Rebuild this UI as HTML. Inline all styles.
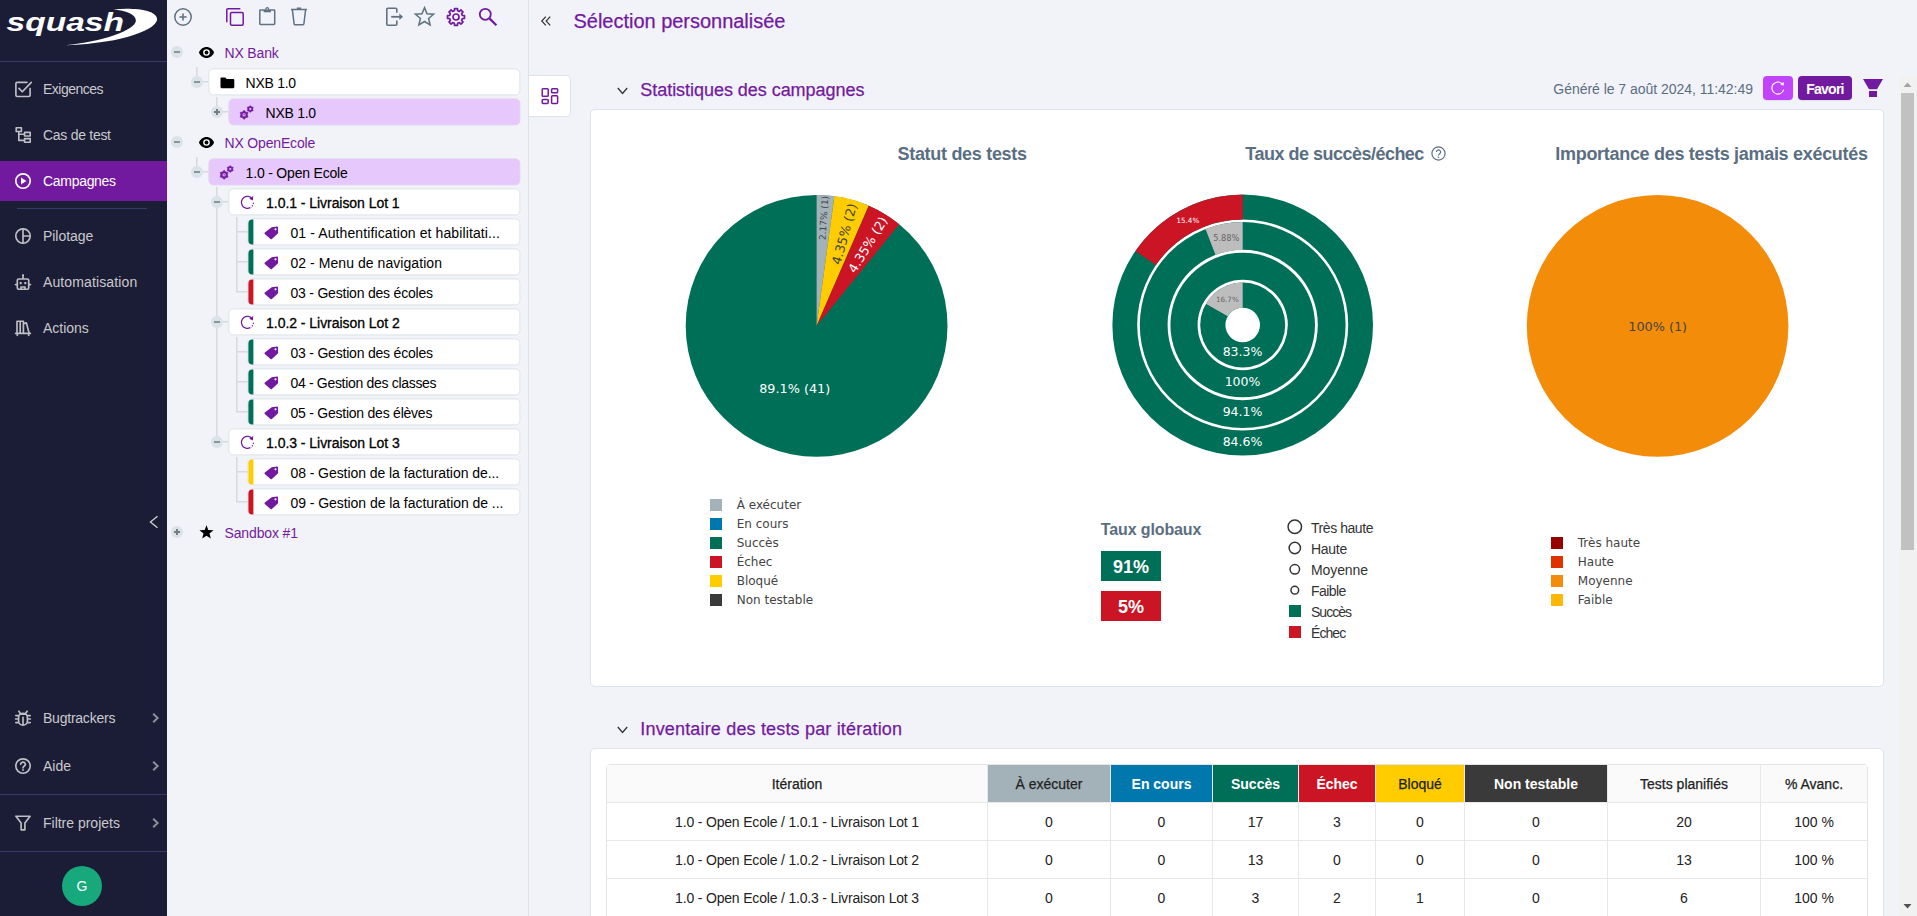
<!DOCTYPE html>
<html lang="fr">
<head>
<meta charset="utf-8">
<title>Squash - Campagnes</title>
<style>
*{box-sizing:border-box;}
html,body{margin:0;padding:0;}
body{width:1917px;height:916px;overflow:hidden;background:#f2f3f8;font-family:"Liberation Sans",sans-serif;font-size:14px;color:#000;position:relative;}
.a{position:absolute;}
svg{display:block;position:absolute;overflow:visible;}
#nav{position:absolute;left:0;top:0;width:167px;height:916px;background:#1b1d36;}
#nav .sep{position:absolute;height:1px;background:#363a6b;}
#nav .item{position:absolute;left:0;width:167px;height:40px;color:#c9c9cc;font-size:14px;line-height:40px;}
#nav .item.on{background:#721a9f;color:#fff;}
#nav .item .tx{position:absolute;left:43px;top:0;white-space:nowrap;}
#tree{position:absolute;left:167px;top:0;width:362px;height:916px;background:#f2f3f8;border-right:1px solid #dce5ea;}
.row{position:absolute;height:27px;transform:translate(-.6px,-.6px);border:1px solid #dbe4e9;border-radius:5px;background:#fff;font-size:14px;line-height:28px;white-space:nowrap;overflow:hidden;color:#000;}
.row.sel{background:#e6c8fc;border-color:#e3d2f2;}
.row .tx{position:absolute;top:0;}
.row .bar{position:absolute;left:-1px;top:-1px;width:6px;height:27px;border-radius:5px 0 0 5px;}
.proj{position:absolute;font-size:14px;color:#721a9f;line-height:20px;white-space:nowrap;}
.tog{position:absolute;width:12px;height:12px;border-radius:6px;background:#dae3e8;}
.tog:before{content:"";position:absolute;left:3px;top:5px;width:6px;height:2px;background:#8b9499;}
.tog.plus:after{content:"";position:absolute;left:5px;top:3px;width:2px;height:6px;background:#8b9499;}
.tog.plus:before{background:#767c80;}
.tog.plus:after{background:#767c80;}
.ln{position:absolute;background:#dadde0;}
#main{position:absolute;left:529px;top:0;width:1388px;height:916px;}
.h1{position:absolute;color:#721a9f;white-space:nowrap;-webkit-text-stroke:.25px #721a9f;}
.card{position:absolute;background:#fff;border:1px solid #dbe5ea;border-radius:5px;}
.ct{position:absolute;font-weight:bold;color:#5a6e82;font-size:18px;white-space:nowrap;line-height:22px;}
.lg{position:absolute;font-family:"DejaVu Sans","Liberation Sans",sans-serif;font-size:12px;color:#444;white-space:nowrap;line-height:14px;}
.lg2{position:absolute;font-size:14px;color:#333;white-space:nowrap;line-height:16px;}
.sw{position:absolute;width:12px;height:12px;}
table{border-collapse:collapse;}
</style>
</head>
<body>
<div id="nav">
<svg style="left:0;top:0" width="167" height="60" viewBox="0 0 167 60"><path fill="#fff" d="M113.5 9.2c20-1.6 42.5 0 43.6 9.6 1 9.5-31 24.6-91.600 26.400 36-3.600 70.500-15 70.400-24.800-.1-6.300-10.400-9.600-22.400-11.200z"/><text x="0" y="0" transform="translate(6.600 30.700) scale(1.315 1)" font-family="Liberation Sans, sans-serif" font-weight="bold" font-style="italic" font-size="25.5" fill="#fff">squash</text></svg>
<div class="sep" style="left:0;top:61px;width:167px"></div>
<div class="item" style="top:69px"><svg style="left:15px;top:12px" width="16" height="16" viewBox="0 0 16 16"><path fill="none" stroke="#bfbfc4" stroke-width="1.65" stroke-linecap="round" stroke-linejoin="round" d="M12 1.3H2.2a1.3 1.3 0 0 0-1.3 1.3v11.6a1.3 1.3 0 0 0 1.3 1.3h11.6a1.3 1.3 0 0 0 1.3-1.3V7.5"/><path fill="none" stroke="#bfbfc4" stroke-width="1.65" stroke-linecap="round" stroke-linejoin="round" d="M4 7.4l3.3 3.4L16.3 1.4"/></svg><span class="tx" style="letter-spacing:-0.51px;">Exigences</span>
</div>
<div class="item" style="top:115px"><svg style="left:15px;top:12px" width="16" height="16" viewBox="0 0 16 16"><path fill="none" stroke="#bfbfc4" stroke-width="1.65" stroke-linecap="round" stroke-linejoin="round" stroke-linejoin="miter" d="M1.2 .7h5.2v3.8H1.2zM9.6 5.4h5.6v3.6H9.6zM9.6 11.6h5.6v3.6H9.6zM3.8 4.5v8.9h5.8M3.8 7.2h5.8"/></svg><span class="tx" style="letter-spacing:-0.28px;">Cas de test</span>
</div>
<div class="item on" style="top:161px"><svg style="left:15px;top:12px" width="16" height="16" viewBox="0 0 16 16"><circle fill="none" stroke="#fff" stroke-width="1.65" stroke-linecap="round" stroke-linejoin="round" cx="8" cy="8" r="7.2" stroke-width="1.6"/><path fill="#fff" d="M6 4.500v7l5.400-3.500z"/></svg><span class="tx" style="letter-spacing:-0.30px;">Campagnes</span>
</div>
<div class="item" style="top:216px"><svg style="left:15px;top:12px" width="16" height="16" viewBox="0 0 16 16"><circle fill="none" stroke="#bfbfc4" stroke-width="1.65" stroke-linecap="round" stroke-linejoin="round" cx="8" cy="8" r="7.2"/><path fill="none" stroke="#bfbfc4" stroke-width="1.65" stroke-linecap="round" stroke-linejoin="round" d="M8 .8v14.4M8 8h7.2"/></svg><span class="tx" style="letter-spacing:-0.05px;">Pilotage</span>
</div>
<div class="item" style="top:262px"><svg style="left:15px;top:12px" width="16" height="16" viewBox="0 0 16 16"><path fill="none" stroke="#bfbfc4" stroke-width="1.65" stroke-linecap="round" stroke-linejoin="round" d="M8 1.2v3.600M3.600 5h8.800a1.300 1.300 0 0 1 1.300 1.300v7.600a1.300 1.300 0 0 1-1.300 1.300H3.600a1.300 1.300 0 0 1-1.300-1.300V6.300a1.300 1.300 0 0 1 1.300-1.300zM.5 10.600h1.600M13.900 10.600h1.600M6 15v-2h4v2"/><circle cx="8" cy="1.2" r="1" fill="#bfbfc4"/><rect x="4.700" y="8" width="2" height="2.200" fill="#bfbfc4"/><rect x="9.300" y="8" width="2" height="2.200" fill="#bfbfc4"/></svg><span class="tx" style="letter-spacing:0.12px;">Automatisation</span>
</div>
<div class="item" style="top:308px"><svg style="left:15px;top:12px" width="16" height="16" viewBox="0 0 16 16"><path fill="none" stroke="#bfbfc4" stroke-width="1.65" stroke-linecap="round" stroke-linejoin="round" stroke-linejoin="miter" d="M2 13.2V1.2h3.2v12M5.2 13.2V1.2h3.2v12M8.8 3.6l2.6-.7 2.7 10.3M.6 13.4h14.8M2.3 13.4v2M13.7 13.4v2"/></svg><span class="tx" style="letter-spacing:-0.02px;">Actions</span>
</div>
<div class="item" style="top:698px"><svg style="left:15px;top:12px" width="16" height="16" viewBox="0 0 16 16"><path fill="none" stroke="#bfbfc4" stroke-width="1.65" stroke-linecap="round" stroke-linejoin="round" d="M5.2 3.2L3.9 1.2M10.8 3.2l1.3-2M3.6 7.4a4.4 4.2 0 0 1 8.8 0v3.6a4.4 4.2 0 0 1-8.8 0zM.8 5.6h2.6M12.6 5.6h2.6M.6 9h3M12.4 9h3M.8 12.6h2.8M12.4 12.6h2.8M8 7.2v7M5.6 4.2h4.8"/></svg><span class="tx" style="letter-spacing:-0.23px;">Bugtrackers</span>
<svg style="left:152px;top:15px" width="7" height="10" viewBox="0 0 7 10"><path fill="none" stroke="#8f8f9a" stroke-width="2" d="M1.2 .8L5.6 5 1.2 9.200"/></svg>
</div>
<div class="item" style="top:746px"><svg style="left:15px;top:12px" width="16" height="16" viewBox="0 0 16 16"><circle fill="none" stroke="#bfbfc4" stroke-width="1.65" stroke-linecap="round" stroke-linejoin="round" cx="8" cy="8" r="7.2"/><path fill="none" stroke="#bfbfc4" stroke-width="1.65" stroke-linecap="round" stroke-linejoin="round" d="M5.7 6.3a2.3 2.2 0 1 1 3.4 1.9c-.8.5-1.1.9-1.1 1.8"/><circle cx="8" cy="12" r=".9" fill="#bfbfc4"/></svg><span class="tx" style="letter-spacing:-0.01px;">Aide</span>
<svg style="left:152px;top:15px" width="7" height="10" viewBox="0 0 7 10"><path fill="none" stroke="#8f8f9a" stroke-width="2" d="M1.2 .8L5.6 5 1.2 9.200"/></svg>
</div>
<div class="item" style="top:803px"><svg style="left:15px;top:12px" width="16" height="16" viewBox="0 0 16 16"><path fill="none" stroke="#bfbfc4" stroke-width="1.65" stroke-linecap="round" stroke-linejoin="round" stroke-linejoin="miter" d="M.9 1.2h14.2L9.9 8v6.8H6.1V8z"/></svg><span class="tx" style="letter-spacing:-0.01px;">Filtre projets</span>
<svg style="left:152px;top:15px" width="7" height="10" viewBox="0 0 7 10"><path fill="none" stroke="#8f8f9a" stroke-width="2" d="M1.2 .8L5.6 5 1.2 9.200"/></svg>
</div>
<div class="sep" style="left:17px;top:208px;width:130px"></div>
<div class="sep" style="left:0;top:794px;width:167px"></div>
<div class="sep" style="left:0;top:851px;width:167px"></div>
<svg style="left:149px;top:515px" width="10" height="14" viewBox="0 0 10 14"><path fill="none" stroke="#d0d0d4" stroke-width="1.300" d="M8.500 1.200L1.400 7l7.100 5.800"/></svg>
<div class="a" style="left:62px;top:866px;width:40px;height:40px;border-radius:20px;background:#17a87b;color:#fff;font-size:14px;line-height:40px;text-align:center">G</div>
</div>
<div id="tree" style="left:0;width:529px;background:none">
<svg style="left:174px;top:8px" width="18" height="18" viewBox="0 0 18 18"><circle cx="9" cy="9" r="8.200" fill="none" stroke="#5e7282" stroke-width="1.500"/><path stroke="#5e7282" stroke-width="1.600" d="M5.400 9h7.200M9 5.400v7.200"/></svg>
<svg style="left:226px;top:8px" width="18" height="18" viewBox="0 0 18 18"><path fill="none" stroke="#721a9f" stroke-width="1.500" stroke-linejoin="round" d="M.8 14.300V1.800a1 1 0 0 1 1-1h12.500"/><rect x="4.500" y="4.600" width="12.700" height="12.700" rx="1.200" fill="none" stroke="#721a9f" stroke-width="1.500"/></svg>
<svg style="left:259px;top:7px" width="17" height="19" viewBox="0 0 17 19"><path fill="none" stroke="#5e7282" stroke-width="1.500" stroke-linejoin="round" d="M4.800 2.900H1.500a.7.700 0 0 0-.7.700v13.200a.7.700 0 0 0 .7.700h13.500a.7.700 0 0 0 .7-.7V3.600a.7.700 0 0 0-.7-.7H11.700"/><path fill="#5e7282" d="M4.600 2.300h7.300v3H4.600z"/><circle cx="8.250" cy="2" r="1.300" fill="#f2f3f8" stroke="#5e7282" stroke-width="1.300"/></svg>
<svg style="left:290px;top:7px" width="18" height="19" viewBox="0 0 18 19"><path fill="none" stroke="#5e7282" stroke-width="1.500" stroke-linejoin="round" d="M1 2.600h16M6.800 1.200h4.400M2.400 2.800l1.700 14a1 1 0 0 0 1 .9h7.800a1 1 0 0 0 1-.9l1.700-14"/></svg>
<svg style="left:386px;top:7px" width="18" height="19" viewBox="0 0 18 19"><path fill="none" stroke="#5e7282" stroke-width="1.600" stroke-linejoin="round" d="M10.800 5.800V2.200a1 1 0 0 0-1-1H1.800a1 1 0 0 0-1 1v15a1 1 0 0 0 1 1h8a1 1 0 0 0 1-1v-3.800"/><path fill="none" stroke="#5e7282" stroke-width="1.800" d="M5.200 9.800h9.500"/><path fill="#5e7282" d="M13.400 6.600l3.600 3.200-3.600 3.200z"/></svg>
<svg style="left:413.500px;top:5.500px" width="21" height="21" viewBox="0 0 21 21"><path fill="none" stroke="#5e7282" stroke-width="1.500" stroke-linejoin="miter" d="M10.50 1.60 L13.03 7.72 L19.63 8.23 L14.59 12.53 L16.14 18.97 L10.50 15.50 L4.86 18.97 L6.41 12.53 L1.37 8.23 L7.97 7.72Z"/></svg>
<svg style="left:446px;top:7px" width="20" height="20" viewBox="0 0 20 20"><path d="M8.52 1.53 L11.48 1.53 L11.63 3.67 L13.33 4.37 L14.95 2.96 L17.04 5.05 L15.63 6.67 L16.33 8.37 L18.47 8.52 L18.47 11.48 L16.33 11.63 L15.63 13.33 L17.04 14.95 L14.95 17.04 L13.33 15.63 L11.63 16.33 L11.48 18.47 L8.52 18.47 L8.37 16.33 L6.67 15.63 L5.05 17.04 L2.96 14.95 L4.37 13.33 L3.67 11.63 L1.53 11.48 L1.53 8.52 L3.67 8.37 L4.37 6.67 L2.96 5.05 L5.05 2.96 L6.67 4.37 L8.37 3.67Z" fill="none" stroke="#721a9f" stroke-width="1.7" stroke-linejoin="round"/><circle cx="10" cy="10" r="3" fill="none" stroke="#721a9f" stroke-width="1.7"/></svg>
<svg style="left:478px;top:7px" width="20" height="20" viewBox="0 0 20 20"><circle cx="7.300" cy="7.300" r="5.500" fill="none" stroke="#721a9f" stroke-width="1.800"/><path stroke="#721a9f" stroke-width="2.300" d="M11.400 11.400l7 6.800"/></svg>
<svg style="left:0;top:0" width="529" height="560" viewBox="0 0 529 560"><path fill="none" stroke="#d7dadd" stroke-width="1.500" d="M196.8 67V82M203 81.8H208M196.8 157V172M203 171.8H208M216.8 97V112M223 111.8H228M216.8 187V442M223 201.8H228M223 321.8H228M223 441.8H228M236.8 217V292.4M236.8 231.7H248M236.8 261.7H248M236.8 291.7H248M236.8 337V412.4M236.8 351.7H248M236.8 381.7H248M236.8 411.7H248M236.8 457V502.4M236.8 471.7H248M236.8 501.7H248"/></svg>
<div class="tog" style="left:171px;top:46px"></div>
<svg style="left:198.5px;top:46.5px" width="15" height="11" viewBox="0 0 15 11"><path fill="#000" d="M7.500 0C3.900 0 1.200 2.400 0 5.500 1.200 8.600 3.900 11 7.500 11S13.800 8.600 15 5.500C13.800 2.400 11.100 0 7.500 0z"/><circle cx="7.500" cy="5.500" r="3.300" fill="#fff"/><circle cx="7.500" cy="5.500" r="1.900" fill="#000"/></svg>
<div class="proj" style="left:224.500px;top:43px;letter-spacing:-0.16px;">NX Bank</div>
<div class="tog" style="left:191px;top:76px"></div>
<div class="row" style="left:209px;top:69px;width:312px">
<svg style="left:10.5px;top:7.8px" width="14" height="11" viewBox="0 0 14 11"><path fill="#000" d="M1.100 0h3.800l1.400 1.500h6.500a1.100 1.100 0 0 1 1.100 1.100v7.100a1.100 1.100 0 0 1-1.100 1.100H1.200A1.100 1.100 0 0 1 .1 9.700V1.100A1.100 1.100 0 0 1 1.100 0z"/></svg>
<span class="tx" style="left:36.2px;letter-spacing:-0.28px;">NXB 1.0</span></div>
<div class="tog plus" style="left:211px;top:106px"></div>
<div class="row sel" style="left:229px;top:99px;width:292px">
<svg style="left:9.8px;top:6px" width="14" height="14" viewBox="0 0 14 14"><path fill-rule="evenodd" fill="#721a9f" stroke="#721a9f" stroke-width=".5" stroke-linejoin="round" d="M4.70 4.80 L6.35 6.54 L8.68 7.10 L8.00 9.40 L8.68 11.70 L6.35 12.26 L4.70 14.00 L3.05 12.26 L0.72 11.70 L1.40 9.40 L0.72 7.10 L3.05 6.54ZM2.80 9.40a1.90 1.90 0 1 0 3.80 0a1.90 1.90 0 1 0 -3.80 0z"/><circle cx="4.70" cy="9.40" r="0.75" fill="#721a9f"/><path fill-rule="evenodd" fill="#721a9f" stroke="#721a9f" stroke-width=".5" stroke-linejoin="round" d="M10.80 0.10 L12.05 1.43 L13.83 1.85 L13.30 3.60 L13.83 5.35 L12.05 5.77 L10.80 7.10 L9.55 5.77 L7.77 5.35 L8.30 3.60 L7.77 1.85 L9.55 1.43ZM9.45 3.60a1.35 1.35 0 1 0 2.70 0a1.35 1.35 0 1 0 -2.70 0z"/></svg>
<span class="tx" style="left:36.2px;letter-spacing:-0.28px;">NXB 1.0</span></div>
<div class="tog" style="left:171px;top:136px"></div>
<svg style="left:198.5px;top:136.5px" width="15" height="11" viewBox="0 0 15 11"><path fill="#000" d="M7.500 0C3.900 0 1.200 2.400 0 5.500 1.200 8.600 3.900 11 7.500 11S13.800 8.600 15 5.500C13.800 2.400 11.100 0 7.500 0z"/><circle cx="7.500" cy="5.500" r="3.300" fill="#fff"/><circle cx="7.500" cy="5.500" r="1.900" fill="#000"/></svg>
<div class="proj" style="left:224.500px;top:133px;letter-spacing:-0.17px;">NX OpenEcole</div>
<div class="tog" style="left:191px;top:166px"></div>
<div class="row sel" style="left:209px;top:159px;width:312px">
<svg style="left:9.8px;top:6px" width="14" height="14" viewBox="0 0 14 14"><path fill-rule="evenodd" fill="#721a9f" stroke="#721a9f" stroke-width=".5" stroke-linejoin="round" d="M4.70 4.80 L6.35 6.54 L8.68 7.10 L8.00 9.40 L8.68 11.70 L6.35 12.26 L4.70 14.00 L3.05 12.26 L0.72 11.70 L1.40 9.40 L0.72 7.10 L3.05 6.54ZM2.80 9.40a1.90 1.90 0 1 0 3.80 0a1.90 1.90 0 1 0 -3.80 0z"/><circle cx="4.70" cy="9.40" r="0.75" fill="#721a9f"/><path fill-rule="evenodd" fill="#721a9f" stroke="#721a9f" stroke-width=".5" stroke-linejoin="round" d="M10.80 0.10 L12.05 1.43 L13.83 1.85 L13.30 3.60 L13.83 5.35 L12.05 5.77 L10.80 7.10 L9.55 5.77 L7.77 5.35 L8.30 3.60 L7.77 1.85 L9.55 1.43ZM9.45 3.60a1.35 1.35 0 1 0 2.70 0a1.35 1.35 0 1 0 -2.70 0z"/></svg>
<span class="tx" style="left:36.2px;letter-spacing:-0.19px;">1.0 - Open Ecole</span></div>
<div class="tog" style="left:211px;top:196px"></div>
<div class="row" style="left:229px;top:189px;width:292px">
<svg style="left:10.5px;top:6px" width="14" height="14" viewBox="0 0 14 14"><path fill="none" stroke="#721a9f" stroke-width="1.300" d="M9.800 12.300A6 6 0 1 1 11.600 3.100"/><path fill="#721a9f" d="M12.800 .7l-.3 4.300-3.700-1.700z"/><path fill="none" stroke="#721a9f" stroke-width="1.300" stroke-dasharray="1.200 1.300" d="M13 7.400a6 6 0 0 1-2.600 4.600"/></svg>
<span class="tx" style="left:36.7px;-webkit-text-stroke:.3px #000;letter-spacing:-0.05px;">1.0.1 - Livraison Lot 1</span></div>
<div class="row" style="left:248px;top:219px;width:273px">
<div class="bar" style="background:#006f57"></div>
<svg style="left:15.8px;top:6.5px" width="14" height="13" viewBox="0 0 14 13"><path fill="#721a9f" d="M7.300 .9l5.300-.8a.9.900 0 0 1 1 .9l.1 5.300a1 1 0 0 1-.3.700l-5.900 5.600a1 1 0 0 1-1.400 0L.4 7.600a1 1 0 0 1 0-1.400z"/><circle cx="11.100" cy="2.900" r="1.100" fill="#fff"/></svg>
<span class="tx" style="left:42px;letter-spacing:0.11px;">01 - Authentification et habilitati...</span></div>
<div class="row" style="left:248px;top:249px;width:273px">
<div class="bar" style="background:#006f57"></div>
<svg style="left:15.8px;top:6.5px" width="14" height="13" viewBox="0 0 14 13"><path fill="#721a9f" d="M7.300 .9l5.300-.8a.9.900 0 0 1 1 .9l.1 5.300a1 1 0 0 1-.3.700l-5.900 5.600a1 1 0 0 1-1.400 0L.4 7.600a1 1 0 0 1 0-1.400z"/><circle cx="11.100" cy="2.900" r="1.100" fill="#fff"/></svg>
<span class="tx" style="left:42px;letter-spacing:0.06px;">02 - Menu de navigation</span></div>
<div class="row" style="left:248px;top:279px;width:273px">
<div class="bar" style="background:#cb1524"></div>
<svg style="left:15.8px;top:6.5px" width="14" height="13" viewBox="0 0 14 13"><path fill="#721a9f" d="M7.300 .9l5.300-.8a.9.900 0 0 1 1 .9l.1 5.300a1 1 0 0 1-.3.700l-5.900 5.600a1 1 0 0 1-1.400 0L.4 7.600a1 1 0 0 1 0-1.400z"/><circle cx="11.100" cy="2.900" r="1.100" fill="#fff"/></svg>
<span class="tx" style="left:42px;letter-spacing:-0.20px;">03 - Gestion des écoles</span></div>
<div class="tog" style="left:211px;top:316px"></div>
<div class="row" style="left:229px;top:309px;width:292px">
<svg style="left:10.5px;top:6px" width="14" height="14" viewBox="0 0 14 14"><path fill="none" stroke="#721a9f" stroke-width="1.300" d="M9.800 12.300A6 6 0 1 1 11.600 3.100"/><path fill="#721a9f" d="M12.800 .7l-.3 4.300-3.700-1.700z"/><path fill="none" stroke="#721a9f" stroke-width="1.300" stroke-dasharray="1.200 1.300" d="M13 7.400a6 6 0 0 1-2.600 4.600"/></svg>
<span class="tx" style="left:36.7px;-webkit-text-stroke:.3px #000;letter-spacing:-0.04px;">1.0.2 - Livraison Lot 2</span></div>
<div class="row" style="left:248px;top:339px;width:273px">
<div class="bar" style="background:#006f57"></div>
<svg style="left:15.8px;top:6.5px" width="14" height="13" viewBox="0 0 14 13"><path fill="#721a9f" d="M7.300 .9l5.300-.8a.9.900 0 0 1 1 .9l.1 5.300a1 1 0 0 1-.3.700l-5.900 5.600a1 1 0 0 1-1.400 0L.4 7.600a1 1 0 0 1 0-1.400z"/><circle cx="11.100" cy="2.900" r="1.100" fill="#fff"/></svg>
<span class="tx" style="left:42px;letter-spacing:-0.20px;">03 - Gestion des écoles</span></div>
<div class="row" style="left:248px;top:369px;width:273px">
<div class="bar" style="background:#006f57"></div>
<svg style="left:15.8px;top:6.5px" width="14" height="13" viewBox="0 0 14 13"><path fill="#721a9f" d="M7.300 .9l5.300-.8a.9.900 0 0 1 1 .9l.1 5.300a1 1 0 0 1-.3.700l-5.900 5.600a1 1 0 0 1-1.400 0L.4 7.600a1 1 0 0 1 0-1.400z"/><circle cx="11.100" cy="2.900" r="1.100" fill="#fff"/></svg>
<span class="tx" style="left:42px;letter-spacing:-0.31px;">04 - Gestion des classes</span></div>
<div class="row" style="left:248px;top:399px;width:273px">
<div class="bar" style="background:#006f57"></div>
<svg style="left:15.8px;top:6.5px" width="14" height="13" viewBox="0 0 14 13"><path fill="#721a9f" d="M7.300 .9l5.300-.8a.9.900 0 0 1 1 .9l.1 5.300a1 1 0 0 1-.3.700l-5.900 5.600a1 1 0 0 1-1.400 0L.4 7.600a1 1 0 0 1 0-1.400z"/><circle cx="11.100" cy="2.900" r="1.100" fill="#fff"/></svg>
<span class="tx" style="left:42px;letter-spacing:-0.23px;">05 - Gestion des élèves</span></div>
<div class="tog" style="left:211px;top:436px"></div>
<div class="row" style="left:229px;top:429px;width:292px">
<svg style="left:10.5px;top:6px" width="14" height="14" viewBox="0 0 14 14"><path fill="none" stroke="#721a9f" stroke-width="1.300" d="M9.800 12.300A6 6 0 1 1 11.600 3.100"/><path fill="#721a9f" d="M12.800 .7l-.3 4.300-3.700-1.700z"/><path fill="none" stroke="#721a9f" stroke-width="1.300" stroke-dasharray="1.200 1.300" d="M13 7.400a6 6 0 0 1-2.600 4.600"/></svg>
<span class="tx" style="left:36.7px;-webkit-text-stroke:.3px #000;letter-spacing:-0.04px;">1.0.3 - Livraison Lot 3</span></div>
<div class="row" style="left:248px;top:459px;width:273px">
<div class="bar" style="background:#ffcc00"></div>
<svg style="left:15.8px;top:6.5px" width="14" height="13" viewBox="0 0 14 13"><path fill="#721a9f" d="M7.300 .9l5.300-.8a.9.900 0 0 1 1 .9l.1 5.300a1 1 0 0 1-.3.700l-5.900 5.600a1 1 0 0 1-1.400 0L.4 7.600a1 1 0 0 1 0-1.400z"/><circle cx="11.100" cy="2.900" r="1.100" fill="#fff"/></svg>
<span class="tx" style="left:42px;letter-spacing:-0.06px;">08 - Gestion de la facturation de...</span></div>
<div class="row" style="left:248px;top:489px;width:273px">
<div class="bar" style="background:#cb1524"></div>
<svg style="left:15.8px;top:6.5px" width="14" height="13" viewBox="0 0 14 13"><path fill="#721a9f" d="M7.300 .9l5.300-.8a.9.900 0 0 1 1 .9l.1 5.300a1 1 0 0 1-.3.700l-5.900 5.600a1 1 0 0 1-1.400 0L.4 7.600a1 1 0 0 1 0-1.400z"/><circle cx="11.100" cy="2.900" r="1.100" fill="#fff"/></svg>
<span class="tx" style="left:42px;letter-spacing:-0.05px;">09 - Gestion de la facturation de ...</span></div>
<div class="tog plus" style="left:171px;top:526px"></div>
<svg style="left:198.5px;top:524.5px" width="15" height="15" viewBox="0 0 15 15"><path fill="#000" d="M7.50 0.20 L9.32 5.09 L14.54 5.31 L10.45 8.56 L11.85 13.59 L7.50 10.70 L3.15 13.59 L4.55 8.56 L0.46 5.31 L5.68 5.09Z"/></svg>
<div class="proj" style="left:224.500px;top:523px;letter-spacing:-0.13px;">Sandbox #1</div>
</div>
<div class="a" style="left:528px;top:0;width:1px;height:916px;background:#dce5ea"></div>
<svg style="left:541px;top:16px" width="10" height="10" viewBox="0 0 10 10"><path fill="none" stroke="#333" stroke-width="1.200" d="M4.800 .6L.8 5l4 4.400M9.200 .6L5.200 5l4 4.400"/></svg>
<div class="h1" style="left:573.500px;top:8px;font-size:20px;line-height:26px;letter-spacing:-0.02px;">Sélection personnalisée</div>
<div class="a" style="left:529px;top:75px;width:42px;height:42px;background:#fff;border:1px solid #dbe5ea;border-left:none;border-radius:0 5px 5px 0"></div>
<svg style="left:541px;top:87px" width="18" height="18" viewBox="0 0 18 18"><g fill="none" stroke="#721a9f" stroke-width="1.500"><rect x="1.200" y="1.700" width="6" height="7.600" rx=".8"/><rect x="10.600" y="1.700" width="6" height="4" rx=".8"/><rect x="1.200" y="12.400" width="6" height="4" rx=".8"/><rect x="10.600" y="8.800" width="6" height="7.600" rx=".8"/></g></svg>
<svg style="left:616.5px;top:87px" width="11" height="8" viewBox="0 0 11 8"><path fill="none" stroke="#333" stroke-width="1.300" d="M.8 1l4.700 5.400L10.200 1"/></svg>
<div class="h1" style="left:640.300px;top:78px;font-size:18px;line-height:24px;letter-spacing:-0.04px;">Statistiques des campagnes</div>
<div class="a" style="left:1553.300px;top:80px;font-size:14px;line-height:18px;color:#5a6e82;white-space:nowrap;letter-spacing:-0.03px;">Généré le 7 août 2024, 11:42:49</div>
<div class="a" style="left:1763px;top:76px;width:30px;height:24px;border-radius:4px;background:#c144fc;box-shadow:0 1px 1px rgba(0,0,0,.08)"><svg style="left:8px;top:5px" width="14" height="14" viewBox="0 0 14 14"><path fill="none" stroke="#fff" stroke-width="1.200" d="M12.700 8.600A6 6 0 1 1 11 2.600"/><path fill="#fff" d="M12.800 .9l-.2 3.800-3.400-1.400z"/></svg></div>
<div class="a" style="left:1798px;top:76px;width:54px;height:24px;border-radius:4px;background:#721a9f;color:#fff;font-weight:bold;font-size:14px;line-height:26px;text-align:center;box-shadow:0 1px 1px rgba(0,0,0,.08);letter-spacing:-0.75px;">Favori</div>
<svg style="left:1863px;top:79px" width="20" height="18" viewBox="0 0 20 18"><path fill="#721a9f" d="M0 0h20l-6 10.200h-8zM6 12h8v6h-8z"/></svg>
<div class="card" style="left:590px;top:109px;width:1294px;height:578px"></div>
<div class="ct" style="left:897.500px;top:143px;letter-spacing:-0.30px;">Statut des tests</div>
<div class="ct" style="left:1245.300px;top:143px;letter-spacing:-0.51px;">Taux de succès/échec</div>
<svg style="left:1431px;top:146px" width="15" height="15" viewBox="0 0 15 15"><circle cx="7.500" cy="7.500" r="6.600" fill="none" stroke="#5a6e82" stroke-width="1.200"/><path fill="none" stroke="#5a6e82" stroke-width="1.200" d="M5.400 6a2.100 2 0 1 1 3.200 1.700c-.8.500-1.100.9-1.100 1.700"/><circle cx="7.500" cy="11.200" r=".8" fill="#5a6e82"/></svg>
<div class="ct" style="left:1555.300px;top:143px;letter-spacing:-0.30px;">Importance des tests jamais exécutés</div>
<svg style="left:0;top:0" width="1917" height="916" viewBox="0 0 1917 916">
<circle cx="816.6" cy="325.8" r="130.9" fill="#006f57"/>
<path d="M816.60 325.80 L816.60 194.90 A130.90 130.90 0 0 1 834.42 196.12 Z" fill="#a3b1b8" />
<path d="M816.60 325.80 L834.42 196.12 A130.90 130.90 0 0 1 868.75 205.74 Z" fill="#ffcc00" />
<path d="M816.60 325.80 L868.75 205.74 A130.90 130.90 0 0 1 899.21 224.26 Z" fill="#cb1524" />
<text x="823.90" y="218.00" font-family="DejaVu Sans, Liberation Sans, sans-serif" font-size="9" fill="#444" text-anchor="middle" dominant-baseline="central" transform="rotate(-86.09 823.90 218.00)">2.17% (1)</text>
<text x="844.30" y="234.00" font-family="DejaVu Sans, Liberation Sans, sans-serif" font-size="12.8" fill="#444" text-anchor="middle" dominant-baseline="central" transform="rotate(-74.35 844.30 234.00)">4.35% (2)</text>
<text x="867.80" y="244.80" font-family="DejaVu Sans, Liberation Sans, sans-serif" font-size="12.8" fill="#fff" text-anchor="middle" dominant-baseline="central" transform="rotate(-58.70 867.80 244.80)">4.35% (2)</text>
<text x="794.70" y="388.20" font-family="DejaVu Sans, Liberation Sans, sans-serif" font-size="12.8" fill="#fff" text-anchor="middle" dominant-baseline="central">89.1% (41)</text>
<path fill-rule="evenodd" fill="#006f57" d="M1112.40 325.00a130.30 130.30 0 1 0 260.60 0a130.30 130.30 0 1 0 -260.60 0zM1137.20 325.00a105.50 105.50 0 1 0 211.00 0a105.50 105.50 0 1 0 -211.00 0z"/>
<path d="M1135.45 251.01 A130.30 130.30 0 0 1 1242.70 194.70 L1242.70 219.50 A105.50 105.50 0 0 0 1155.86 265.09 Z" fill="#cb1524" />
<path fill-rule="evenodd" fill="#006f57" d="M1139.80 325.00a102.90 102.90 0 1 0 205.80 0a102.90 102.90 0 1 0 -205.80 0zM1167.60 325.00a75.10 75.10 0 1 0 150.20 0a75.10 75.10 0 1 0 -150.20 0z"/>
<path d="M1205.49 229.06 A102.90 102.90 0 0 1 1242.70 222.10 L1242.70 249.90 A75.10 75.10 0 0 0 1215.54 254.98 Z" fill="#bdbdbd" />
<path fill-rule="evenodd" fill="#006f57" d="M1170.40 325.00a72.30 72.30 0 1 0 144.60 0a72.30 72.30 0 1 0 -144.60 0zM1197.60 325.00a45.10 45.10 0 1 0 90.20 0a45.10 45.10 0 1 0 -90.20 0z"/>
<path fill-rule="evenodd" fill="#006f57" d="M1200.20 325.00a42.50 42.50 0 1 0 85.00 0a42.50 42.50 0 1 0 -85.00 0zM1225.40 325.00a17.30 17.30 0 1 0 34.60 0a17.30 17.30 0 1 0 -34.60 0z"/>
<path d="M1205.89 303.75 A42.50 42.50 0 0 1 1242.70 282.50 L1242.70 307.70 A17.30 17.30 0 0 0 1227.72 316.35 Z" fill="#bdbdbd" />
<text x="1187.80" y="220.60" font-family="DejaVu Sans, Liberation Sans, sans-serif" font-size="7.2" fill="#fff" text-anchor="middle" dominant-baseline="central">15.4%</text>
<text x="1226.20" y="238.30" font-family="DejaVu Sans, Liberation Sans, sans-serif" font-size="8.2" fill="#666" text-anchor="middle" dominant-baseline="central">5.88%</text>
<text x="1227.30" y="299.40" font-family="DejaVu Sans, Liberation Sans, sans-serif" font-size="7.2" fill="#666" text-anchor="middle" dominant-baseline="central">16.7%</text>
<text x="1242.50" y="351.50" font-family="DejaVu Sans, Liberation Sans, sans-serif" font-size="12.5" fill="#fff" text-anchor="middle" dominant-baseline="central">83.3%</text>
<text x="1242.50" y="381.50" font-family="DejaVu Sans, Liberation Sans, sans-serif" font-size="12.5" fill="#fff" text-anchor="middle" dominant-baseline="central">100%</text>
<text x="1242.50" y="411.50" font-family="DejaVu Sans, Liberation Sans, sans-serif" font-size="12.5" fill="#fff" text-anchor="middle" dominant-baseline="central">94.1%</text>
<text x="1242.50" y="441.50" font-family="DejaVu Sans, Liberation Sans, sans-serif" font-size="12.5" fill="#fff" text-anchor="middle" dominant-baseline="central">84.6%</text>
<circle cx="1657.6" cy="325.9" r="130.8" fill="#f38c08"/>
<text x="1657.70" y="326.70" font-family="DejaVu Sans, Liberation Sans, sans-serif" font-size="12.8" fill="#444" text-anchor="middle" dominant-baseline="central">100% (1)</text>
</svg>
<div class="sw" style="left:710px;top:499px;background:#a3b1b8"></div><div class="lg" style="left:736.700px;top:498px">À exécuter</div>
<div class="sw" style="left:710px;top:518px;background:#0078ae"></div><div class="lg" style="left:736.700px;top:517px">En cours</div>
<div class="sw" style="left:710px;top:537px;background:#006f57"></div><div class="lg" style="left:736.700px;top:536px">Succès</div>
<div class="sw" style="left:710px;top:556px;background:#cb1524"></div><div class="lg" style="left:736.700px;top:555px">Échec</div>
<div class="sw" style="left:710px;top:575px;background:#ffcc00"></div><div class="lg" style="left:736.700px;top:574px">Bloqué</div>
<div class="sw" style="left:710px;top:594px;background:#3a3a3a"></div><div class="lg" style="left:736.700px;top:593px">Non testable</div>
<div class="ct" style="left:1100.800px;top:520px;font-size:16px;line-height:20px;letter-spacing:-0.12px;">Taux globaux</div>
<div class="a" style="left:1101px;top:551px;width:60px;height:30px;background:#006f57;color:#fff;font-weight:bold;font-size:18px;line-height:32px;text-align:center">91%</div>
<div class="a" style="left:1101px;top:591px;width:60px;height:30px;background:#cb1524;color:#fff;font-weight:bold;font-size:18px;line-height:32px;text-align:center">5%</div>
<svg style="left:1280px;top:515px" width="30" height="90" viewBox="1280 515 30 90">
<circle cx="1294.800" cy="526.7" r="6.75" fill="none" stroke="#333" stroke-width="1.500"/>
<circle cx="1294.800" cy="548" r="5.65" fill="none" stroke="#333" stroke-width="1.500"/>
<circle cx="1294.800" cy="569.3" r="4.75" fill="none" stroke="#333" stroke-width="1.500"/>
<circle cx="1294.800" cy="590.2" r="3.85" fill="none" stroke="#333" stroke-width="1.500"/>
</svg>
<div class="lg2" style="left:1311px;top:520px;letter-spacing:-0.44px;">Très haute</div>
<div class="lg2" style="left:1311px;top:541px;letter-spacing:-0.27px;">Haute</div>
<div class="lg2" style="left:1311px;top:562px;letter-spacing:-0.10px;">Moyenne</div>
<div class="lg2" style="left:1311px;top:583px;letter-spacing:-0.56px;">Faible</div>
<div class="sw" style="left:1289px;top:605px;background:#006f57"></div><div class="lg2" style="left:1311px;top:604px;letter-spacing:-0.97px;">Succès</div>
<div class="sw" style="left:1289px;top:626px;background:#cb1524"></div><div class="lg2" style="left:1311px;top:625px;letter-spacing:-0.94px;">Échec</div>
<div class="sw" style="left:1551px;top:537px;background:#990000"></div><div class="lg" style="left:1577.800px;top:536px">Très haute</div>
<div class="sw" style="left:1551px;top:556px;background:#e03200"></div><div class="lg" style="left:1577.800px;top:555px">Haute</div>
<div class="sw" style="left:1551px;top:575px;background:#f38c08"></div><div class="lg" style="left:1577.800px;top:574px">Moyenne</div>
<div class="sw" style="left:1551px;top:594px;background:#ffb80a"></div><div class="lg" style="left:1577.800px;top:593px">Faible</div>
<svg style="left:616.5px;top:726px" width="11" height="8" viewBox="0 0 11 8"><path fill="none" stroke="#333" stroke-width="1.300" d="M.8 1l4.700 5.400L10.200 1"/></svg>
<div class="h1" style="left:640.300px;top:717px;font-size:18px;line-height:24px;letter-spacing:0.17px;">Inventaire des tests par itération</div>
<div class="card" style="left:590px;top:748px;width:1294px;height:200px"></div>
<div class="a" style="left:606px;top:764px;width:1262px;height:160px;background:#fff;border:1px solid #e4e4e4;border-radius:4px 4px 0 0"></div>
<div class="a" style="left:607px;top:765px;width:380px;height:37px;background:#fafafa;color:#222;-webkit-text-stroke:.25px #222;font-size:14px;line-height:38px;text-align:center;white-space:nowrap;">Itération</div>
<div class="a" style="left:988px;top:765px;width:122px;height:37px;background:#a3b1b8;color:#222;-webkit-text-stroke:.25px #222;font-size:14px;line-height:38px;text-align:center;white-space:nowrap;">À exécuter</div>
<div class="a" style="left:1111px;top:765px;width:101px;height:37px;background:#0078ae;color:#fff;font-weight:bold;font-size:14px;line-height:38px;text-align:center;white-space:nowrap;">En cours</div>
<div class="a" style="left:1213px;top:765px;width:85px;height:37px;background:#006f57;color:#fff;font-weight:bold;font-size:14px;line-height:38px;text-align:center;white-space:nowrap;">Succès</div>
<div class="a" style="left:1299px;top:765px;width:76px;height:37px;background:#cb1524;color:#fff;font-weight:bold;font-size:14px;line-height:38px;text-align:center;white-space:nowrap;">Échec</div>
<div class="a" style="left:1376px;top:765px;width:88px;height:37px;background:#ffcc00;color:#222;-webkit-text-stroke:.25px #222;font-size:14px;line-height:38px;text-align:center;white-space:nowrap;">Bloqué</div>
<div class="a" style="left:1465px;top:765px;width:142px;height:37px;background:#3a3a3a;color:#fff;font-weight:bold;font-size:14px;line-height:38px;text-align:center;white-space:nowrap;">Non testable</div>
<div class="a" style="left:1608px;top:765px;width:152px;height:37px;background:#fafafa;color:#222;-webkit-text-stroke:.25px #222;font-size:14px;line-height:38px;text-align:center;white-space:nowrap;">Tests planifiés</div>
<div class="a" style="left:1761px;top:765px;width:106px;height:37px;background:#fafafa;color:#222;-webkit-text-stroke:.25px #222;font-size:14px;line-height:38px;text-align:center;white-space:nowrap;">% Avanc.</div>
<div class="a" style="left:607px;top:802px;width:1260px;height:1px;background:#e8e8e8"></div>
<div class="a" style="left:607px;top:803px;width:380px;height:37px;color:#222;font-size:14px;line-height:38px;text-align:center;white-space:nowrap;letter-spacing:-0.18px;">1.0 - Open Ecole / 1.0.1 - Livraison Lot 1</div>
<div class="a" style="left:988px;top:803px;width:122px;height:37px;color:#222;font-size:14px;line-height:38px;text-align:center;white-space:nowrap;">0</div>
<div class="a" style="left:1111px;top:803px;width:101px;height:37px;color:#222;font-size:14px;line-height:38px;text-align:center;white-space:nowrap;">0</div>
<div class="a" style="left:1213px;top:803px;width:85px;height:37px;color:#222;font-size:14px;line-height:38px;text-align:center;white-space:nowrap;">17</div>
<div class="a" style="left:1299px;top:803px;width:76px;height:37px;color:#222;font-size:14px;line-height:38px;text-align:center;white-space:nowrap;">3</div>
<div class="a" style="left:1376px;top:803px;width:88px;height:37px;color:#222;font-size:14px;line-height:38px;text-align:center;white-space:nowrap;">0</div>
<div class="a" style="left:1465px;top:803px;width:142px;height:37px;color:#222;font-size:14px;line-height:38px;text-align:center;white-space:nowrap;">0</div>
<div class="a" style="left:1608px;top:803px;width:152px;height:37px;color:#222;font-size:14px;line-height:38px;text-align:center;white-space:nowrap;">20</div>
<div class="a" style="left:1761px;top:803px;width:106px;height:37px;color:#222;font-size:14px;line-height:38px;text-align:center;white-space:nowrap;">100 %</div>
<div class="a" style="left:607px;top:840px;width:1260px;height:1px;background:#e8e8e8"></div>
<div class="a" style="left:607px;top:841px;width:380px;height:37px;color:#222;font-size:14px;line-height:38px;text-align:center;white-space:nowrap;letter-spacing:-0.18px;">1.0 - Open Ecole / 1.0.2 - Livraison Lot 2</div>
<div class="a" style="left:988px;top:841px;width:122px;height:37px;color:#222;font-size:14px;line-height:38px;text-align:center;white-space:nowrap;">0</div>
<div class="a" style="left:1111px;top:841px;width:101px;height:37px;color:#222;font-size:14px;line-height:38px;text-align:center;white-space:nowrap;">0</div>
<div class="a" style="left:1213px;top:841px;width:85px;height:37px;color:#222;font-size:14px;line-height:38px;text-align:center;white-space:nowrap;">13</div>
<div class="a" style="left:1299px;top:841px;width:76px;height:37px;color:#222;font-size:14px;line-height:38px;text-align:center;white-space:nowrap;">0</div>
<div class="a" style="left:1376px;top:841px;width:88px;height:37px;color:#222;font-size:14px;line-height:38px;text-align:center;white-space:nowrap;">0</div>
<div class="a" style="left:1465px;top:841px;width:142px;height:37px;color:#222;font-size:14px;line-height:38px;text-align:center;white-space:nowrap;">0</div>
<div class="a" style="left:1608px;top:841px;width:152px;height:37px;color:#222;font-size:14px;line-height:38px;text-align:center;white-space:nowrap;">13</div>
<div class="a" style="left:1761px;top:841px;width:106px;height:37px;color:#222;font-size:14px;line-height:38px;text-align:center;white-space:nowrap;">100 %</div>
<div class="a" style="left:607px;top:878px;width:1260px;height:1px;background:#e8e8e8"></div>
<div class="a" style="left:607px;top:879px;width:380px;height:37px;color:#222;font-size:14px;line-height:38px;text-align:center;white-space:nowrap;letter-spacing:-0.18px;">1.0 - Open Ecole / 1.0.3 - Livraison Lot 3</div>
<div class="a" style="left:988px;top:879px;width:122px;height:37px;color:#222;font-size:14px;line-height:38px;text-align:center;white-space:nowrap;">0</div>
<div class="a" style="left:1111px;top:879px;width:101px;height:37px;color:#222;font-size:14px;line-height:38px;text-align:center;white-space:nowrap;">0</div>
<div class="a" style="left:1213px;top:879px;width:85px;height:37px;color:#222;font-size:14px;line-height:38px;text-align:center;white-space:nowrap;">3</div>
<div class="a" style="left:1299px;top:879px;width:76px;height:37px;color:#222;font-size:14px;line-height:38px;text-align:center;white-space:nowrap;">2</div>
<div class="a" style="left:1376px;top:879px;width:88px;height:37px;color:#222;font-size:14px;line-height:38px;text-align:center;white-space:nowrap;">1</div>
<div class="a" style="left:1465px;top:879px;width:142px;height:37px;color:#222;font-size:14px;line-height:38px;text-align:center;white-space:nowrap;">0</div>
<div class="a" style="left:1608px;top:879px;width:152px;height:37px;color:#222;font-size:14px;line-height:38px;text-align:center;white-space:nowrap;">6</div>
<div class="a" style="left:1761px;top:879px;width:106px;height:37px;color:#222;font-size:14px;line-height:38px;text-align:center;white-space:nowrap;">100 %</div>
<div class="a" style="left:987px;top:765px;width:1px;height:151px;background:#e8e8e8"></div>
<div class="a" style="left:1110px;top:765px;width:1px;height:151px;background:#e8e8e8"></div>
<div class="a" style="left:1212px;top:765px;width:1px;height:151px;background:#e8e8e8"></div>
<div class="a" style="left:1298px;top:765px;width:1px;height:151px;background:#e8e8e8"></div>
<div class="a" style="left:1375px;top:765px;width:1px;height:151px;background:#e8e8e8"></div>
<div class="a" style="left:1464px;top:765px;width:1px;height:151px;background:#e8e8e8"></div>
<div class="a" style="left:1607px;top:765px;width:1px;height:151px;background:#e8e8e8"></div>
<div class="a" style="left:1760px;top:765px;width:1px;height:151px;background:#e8e8e8"></div>
<div class="a" style="left:1899px;top:76px;width:18px;height:840px;background:#f1f1f1"></div>
<div class="a" style="left:1901px;top:93px;width:13px;height:457px;background:#c1c1c1"></div>
<svg style="left:1903px;top:82px" width="9" height="6" viewBox="0 0 9 6"><path fill="#a3a3a3" d="M4.500 .5L8.500 5h-8z"/></svg>
<svg style="left:1903px;top:903px" width="9" height="6" viewBox="0 0 9 6"><path fill="#505050" d="M4.500 5.500L8.500 1h-8z"/></svg>
</body>
</html>
